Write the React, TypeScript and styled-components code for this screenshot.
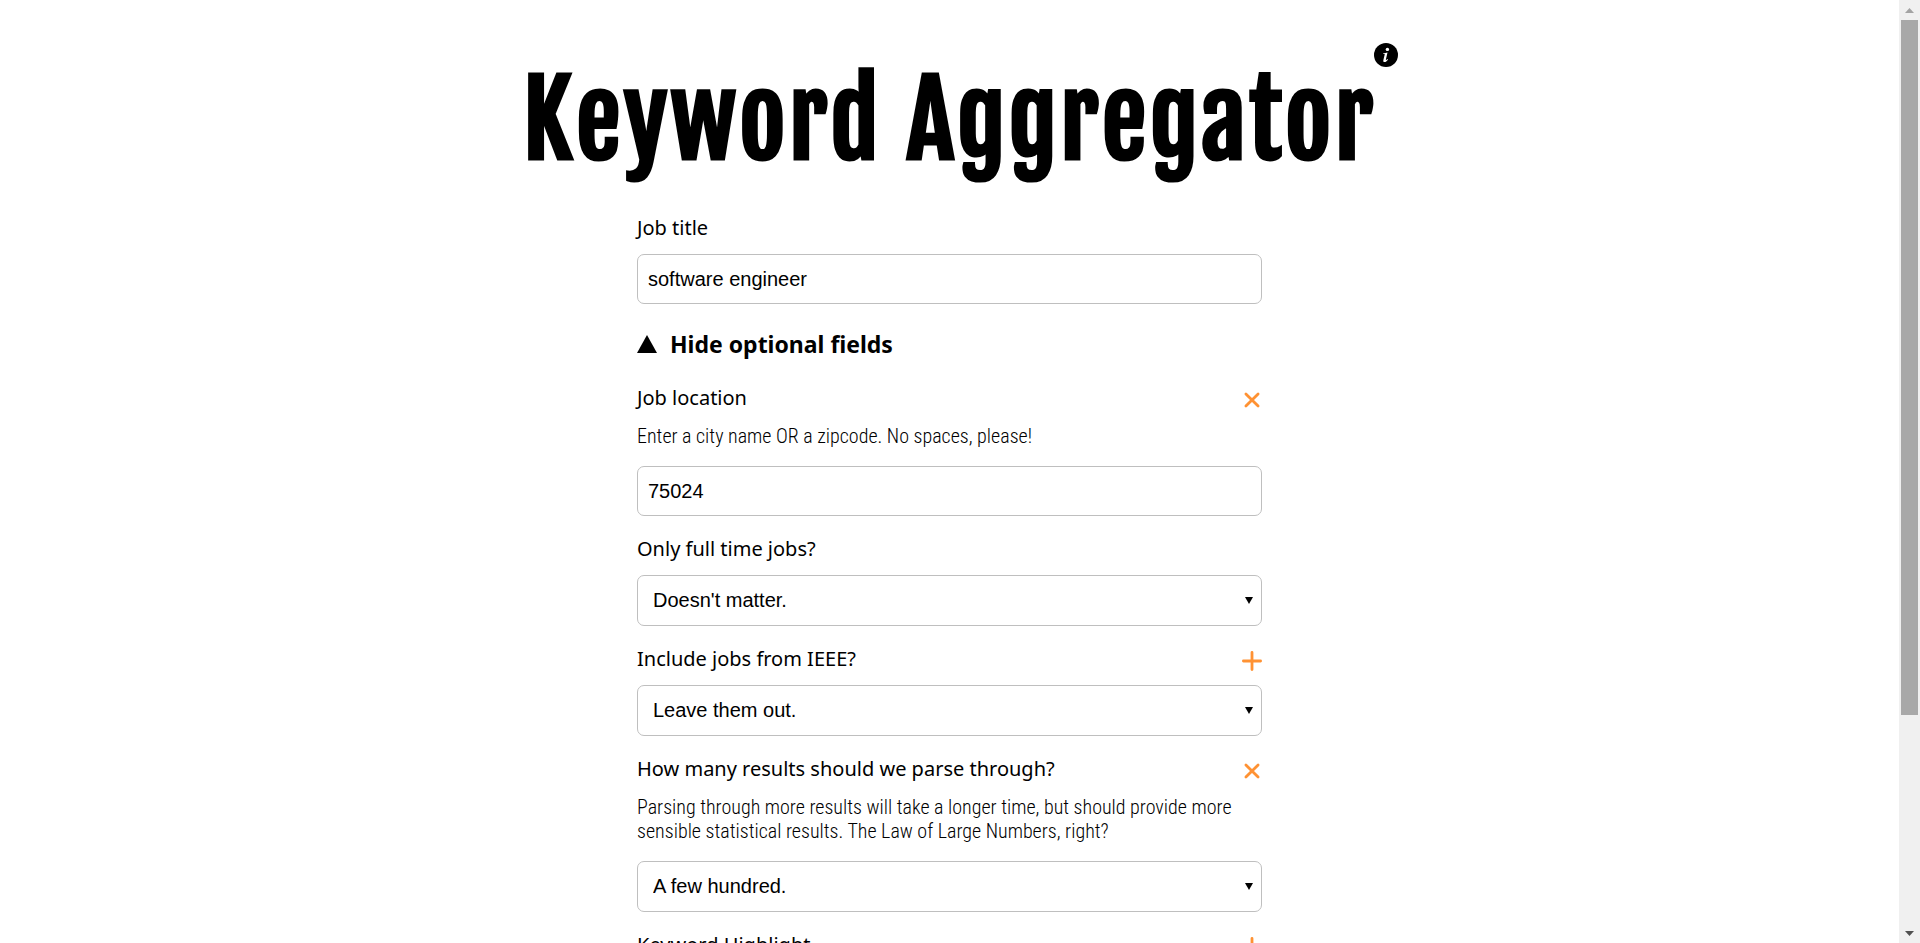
import React, { useState } from "react";
import styled, { createGlobalStyle } from "styled-components";

const GlobalStyle = createGlobalStyle`
  *, *::before, *::after { box-sizing: border-box; }
  body { margin: 0; background: #fff; color: #000; font-family: "Noto Sans", sans-serif; }
`;

const Shell = styled.div`
  display: flex;
  height: 100vh;
`;

const Page = styled.main`
  flex: 1;
  min-width: 0;
  overflow-y: auto;
  scrollbar-width: none;
  padding-top: 47px;
`;

const Header = styled.header`
  display: flex;
  justify-content: center;
`;

const TitleWrap = styled.div`
  position: relative;
`;

const Title = styled.h1`
  margin: 0;
  font-family: "Fjalla One", Impact, sans-serif;
  font-size: 101px;
  line-height: 148px;
  font-weight: 700;
  font-kerning: none;
  letter-spacing: 3px;
  white-space: nowrap;
`;

const InfoButton = styled.button`
  position: absolute;
  top: -4px;
  left: 100%;
  margin-left: -2px;
  display: flex;
  padding: 0;
  border: 0;
  background: none;
  cursor: pointer;
`;

const Form = styled.form`
  display: flex;
  flex-direction: column;
  gap: 21px;
  width: min(625px, 90%);
  margin: 21px auto 60px;
`;

const Field = styled.div`
  display: flex;
  flex-direction: column;
`;

const LabelRow = styled.div`
  display: flex;
  justify-content: space-between;
  align-items: flex-start;
  height: 24px;
  margin-bottom: 14px;
`;

const Label = styled.label`
  font-size: 20px;
  line-height: 24px;
`;

const IconButton = styled.button`
  display: flex;
  margin-top: 4px;
  padding: 0;
  border: 0;
  background: none;
  cursor: pointer;
`;

const TipIcon = styled.svg<{ $open?: boolean }>`
  width: 20px;
  height: 20px;
  overflow: visible;
  transform: rotate(${(p) => (p.$open ? 45 : 0)}deg);
`;

const Hint = styled.p`
  margin: 0 0 18px;
  font-family: "Roboto Condensed", Roboto, sans-serif;
  font-size: 20px;
  line-height: 24px;
  font-weight: 300;
`;

const TextInput = styled.input`
  width: 100%;
  height: 50px;
  padding: 0 10px;
  border: 1px solid #bfbfbf;
  border-radius: 7px;
  background: #fff;
  color: #000;
  font-family: "Liberation Sans", Arial, sans-serif;
  font-size: 20px;
`;

const SelectWrap = styled.div`
  position: relative;
`;

const Select = styled.select`
  appearance: none;
  display: block;
  width: 100%;
  height: 51px;
  padding: 0 30px 2px 15px;
  border: 1px solid #bfbfbf;
  border-radius: 7px;
  background: #fff;
  color: #000;
  font-family: "Liberation Sans", Arial, sans-serif;
  font-size: 20px;
`;

const SelectArrow = styled.svg`
  position: absolute;
  top: 22px;
  right: 9px;
  pointer-events: none;
`;

const Toggle = styled.button`
  display: flex;
  align-items: center;
  gap: 13px;
  margin-bottom: 2px;
  padding: 0;
  border: 0;
  background: none;
  color: #000;
  font-family: "Noto Sans", sans-serif;
  font-size: 23px;
  line-height: 38px;
  font-weight: 700;
  cursor: pointer;
`;

const ScrollTrack = styled.div`
  display: flex;
  flex-direction: column;
  width: 21px;
  padding: 0 2px;
  background: #f0f0f0;
`;

const ScrollEnd = styled.div`
  display: flex;
  justify-content: center;
  align-items: center;
  height: 20px;
`;

const ScrollLane = styled.div`
  flex: 1;
`;

const ScrollThumb = styled.div`
  height: 77%;
  background: #a8a8a8;
`;

function TipButton({ open, onClick }: { open: boolean; onClick: () => void }) {
  return (
    <IconButton type="button" aria-label={open ? "Hide help" : "Show help"} onClick={onClick}>
      <TipIcon viewBox="0 0 20 20" $open={open}>
        <path d="M10 1.4v17.2M1.4 10h17.2" stroke="#ff9233" strokeWidth="2.8" strokeLinecap="round" />
      </TipIcon>
    </IconButton>
  );
}

type FieldProps = {
  id: string;
  label: string;
  hint?: string;
  defaultOpen?: boolean;
  children: React.ReactNode;
};

function FormField({ id, label, hint, defaultOpen = false, children }: FieldProps) {
  const [open, setOpen] = useState(defaultOpen);
  return (
    <Field>
      <LabelRow>
        <Label htmlFor={id}>{label}</Label>
        {hint && <TipButton open={open} onClick={() => setOpen(!open)} />}
      </LabelRow>
      {hint && open && <Hint>{hint}</Hint>}
      {children}
    </Field>
  );
}

function SelectBox({ id, options }: { id: string; options: string[] }) {
  return (
    <SelectWrap>
      <Select id={id}>
        {options.map((o) => (
          <option key={o}>{o}</option>
        ))}
      </Select>
      <SelectArrow width="8" height="7" viewBox="0 0 8 7" aria-hidden="true">
        <path d="M0 0h8L4 7z" />
      </SelectArrow>
    </SelectWrap>
  );
}

export default function App() {
  const [showOptional, setShowOptional] = useState(true);
  return (
    <Shell>
      <GlobalStyle />
      <Page>
        <Header>
          <TitleWrap>
            <Title>Keyword Aggregator</Title>
            <InfoButton type="button" aria-label="About">
              <svg width="24" height="24" viewBox="0 0 24 24">
                <circle cx="12" cy="12" r="12" />
                <circle cx="13.4" cy="6.4" r="1.7" fill="#fff" />
                <path
                  d="M9.1 10.4L13.5 9.5 11.9 16.6C11.7 17.5 12.3 17.3 13.4 16L14 16.5C12.7 18.5 11.4 19.2 10.4 19.1 9.4 19 9.1 18.1 9.4 16.9L10.7 11.6C10.9 10.9 10.4 10.9 9.1 11z"
                  fill="#fff"
                />
              </svg>
            </InfoButton>
          </TitleWrap>
        </Header>
        <Form onSubmit={(e) => e.preventDefault()}>
          <FormField id="title" label="Job title">
            <TextInput id="title" defaultValue="software engineer" />
          </FormField>
          <Toggle type="button" aria-expanded={showOptional} onClick={() => setShowOptional(!showOptional)}>
            <svg width="20" height="18" viewBox="0 0 20 18" aria-hidden="true">
              <path d={showOptional ? "M10 0L20 18H0z" : "M10 18L20 0H0z"} />
            </svg>
            {showOptional ? "Hide optional fields" : "Show optional fields"}
          </Toggle>
          {showOptional && (
            <>
              <FormField
                id="location"
                label="Job location"
                hint="Enter a city name OR a zipcode. No spaces, please!"
                defaultOpen
              >
                <TextInput id="location" defaultValue="75024" />
              </FormField>
              <FormField id="fulltime" label="Only full time jobs?">
                <SelectBox id="fulltime" options={["Doesn't matter.", "Yes.", "No."]} />
              </FormField>
              <FormField id="ieee" label="Include jobs from IEEE?" hint="Adds the listings from the IEEE job site.">
                <SelectBox id="ieee" options={["Leave them out.", "Include them."]} />
              </FormField>
              <FormField
                id="count"
                label="How many results should we parse through?"
                hint="Parsing through more results will take a longer time, but should provide more sensible statistical results. The Law of Large Numbers, right?"
                defaultOpen
              >
                <SelectBox id="count" options={["A few hundred.", "A thousand."]} />
              </FormField>
              <FormField id="highlight" label="Keyword Highlight" hint="Keywords to highlight in the results.">
                <TextInput id="highlight" />
              </FormField>
            </>
          )}
        </Form>
      </Page>
      <ScrollTrack aria-hidden="true">
        <ScrollEnd>
          <svg width="9" height="5" viewBox="0 0 9 5">
            <path d="M4.5 0L9 5H0z" fill="#a3a3a3" />
          </svg>
        </ScrollEnd>
        <ScrollLane>
          <ScrollThumb />
        </ScrollLane>
        <ScrollEnd>
          <svg width="9" height="5" viewBox="0 0 9 5">
            <path d="M4.5 5L9 0H0z" fill="#505050" />
          </svg>
        </ScrollEnd>
      </ScrollTrack>
    </Shell>
  );
}
